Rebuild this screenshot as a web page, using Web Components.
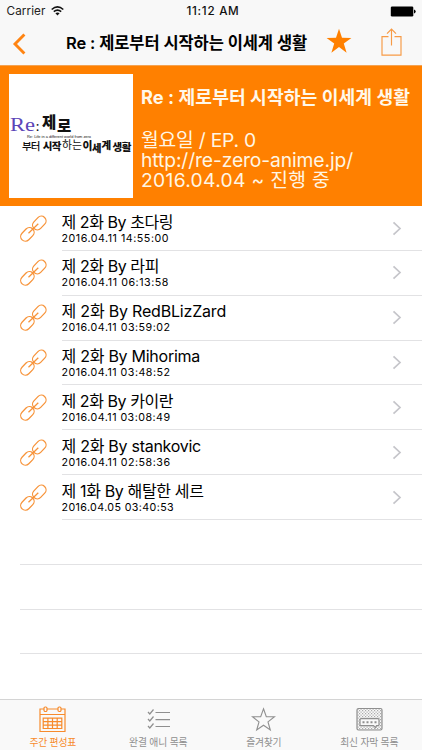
<!DOCTYPE html>
<html lang="ko">
<head>
<meta charset="utf-8">
<title>Re : 제로부터 시작하는 이세계 생활</title>
<style>
html,body{margin:0;height:100%;background:#fff;overflow:hidden}
body{font-family:Inter,"Noto Sans CJK KR",sans-serif;color:#000}
</style>
</head>
<body>
<app-screen></app-screen>
<script>
const define = (name, html, setup) => {
  const t = document.createElement('template');
  t.innerHTML = html;
  customElements.define(name, class extends HTMLElement {
    connectedCallback() {
      if (this.shadowRoot) return;
      this.attachShadow({mode: 'open'}).append(t.content.cloneNode(true));
      if (setup) setup(this, this.shadowRoot);
    }
  });
};

/* One line of text, tracked to the width given in its w attribute. */
define('fit-text', `<style>:host{display:block;white-space:pre}span{display:inline-block}</style><span><slot></slot></span>`, (el, root) => {
  const s = root.querySelector('span');
  const w = +el.getAttribute('w');
  const n = [...el.textContent].length;
  s.style.letterSpacing = ((w - s.getBoundingClientRect().width) / n) + 'px';
});

define('status-bar', `<style>
:host{display:grid;grid-template-columns:1fr auto 1fr;height:22px;align-items:center;font-size:11.7px;line-height:22px;color:#222}
.l{display:flex;align-items:center;gap:5px;padding-left:6.500px}
.r{display:flex;justify-content:flex-end;padding-right:6px}
.t{font-weight:500;color:#111;padding-left:4px}
svg{display:block}
</style>
<div class="l"><fit-text w="39">Carrier</fit-text>
<svg width="13" height="10" viewBox="0 0 13 10"><g fill="none" stroke="#111" stroke-width="1.6"><path d="M.7 3.5Q6.5-1.7 12.3 3.5"/><path d="M2.8 5.7Q6.5 2.4 10.2 5.7"/></g><path d="M4.4 7.3Q6.5 5.5 8.6 7.3L6.5 9.5Z" fill="#111"/></svg></div>
<fit-text class="t" w="53">11:12 AM</fit-text>
<div class="r"><svg width="26" height="11" viewBox="0 0 26 11"><rect x=".8" y=".5" width="22.5" height="10" rx="1.3" fill="#000"/><path d="M24 3.6q1.7.4 1.7 1.9t-1.7 1.9z" fill="#000"/></svg></div>`);

define('nav-bar', `<style>
:host{display:flex;height:43px;align-items:center;padding:0 18px 0 12px;border-bottom:1px solid #f4a251}
fit-text{font-size:16.5px;font-weight:600;line-height:41px;margin-left:40px;flex:none}
.star{margin-left:18.500px;flex:none;margin-top:-5px}.share{margin-left:29.500px;flex:none;margin-top:-3px}
</style>
<svg width="14" height="22" viewBox="0 0 14 22"><path d="M12.4 1.5 3 11l9.400 9.500" fill="none" stroke="#ff8412" stroke-width="2.900"/></svg>
<fit-text w="241">Re : 제로부터 시작하는 이세계 생활</fit-text>
<svg class="star" width="26" height="26" viewBox="0 0 26 26"><path d="M13 .7 16 9.800 25.400 9.900 17.800 15.500 20.600 24.700 13 19.100 5.400 24.700 8.200 15.500.6 9.900 10 9.800Z" fill="#ff8000"/></svg>
<svg class="share" width="21" height="28" viewBox="0 0 21 28"><path d="M7.500 8.600H1v18.500h19V8.600h-6.500M10.500 17.500V1M6 5.600 10.500 1 15 5.600" fill="none" stroke="#f79a45" stroke-width="1.150"/></svg>`);

define('title-logo', `<style>:host{display:block;width:124px;height:124px;background:#fff}svg{display:block}
text{font-family:"Noto Sans CJK KR",sans-serif;fill:#111}.b{font-weight:900}.m{font-weight:500}</style>
<svg width="124" height="124" viewBox="8.500 74 124 124">
<text x="9.500" y="131" style="font-family:'Liberation Serif',serif;fill:#5b45b8" font-size="19.500" textLength="25" lengthAdjust="spacingAndGlyphs">Re</text>
<text x="35" y="131" style="font-family:'Liberation Serif',serif" font-size="15">:</text>
<text class="b" x="41.500" y="128.300" font-size="15.500">제</text>
<text class="b" x="56.500" y="132.300" font-size="15.500">로</text>
<text x="26.500" y="138" font-size="4" style="font-family:'Liberation Sans',sans-serif" textLength="64" lengthAdjust="spacingAndGlyphs">Re: Life in a different world from zero</text>
<text class="m" x="21.500" y="150.300" font-size="10.500" textLength="18.500">부터</text>
<text class="b" x="42.300" y="150.300" font-size="10.500" textLength="18.500">시작</text>
<text x="61.500" y="149" font-size="10.800" textLength="20">하는</text>
<text class="b" x="82" y="150" font-size="10.800">이</text>
<text class="b" x="91.500" y="152" font-size="10.300">세</text>
<text class="b" x="101" y="148.800" font-size="10.500">계</text>
<text class="b" x="112" y="150.500" font-size="10.500" textLength="19">생활</text>
</svg>`);

define('anime-hero', `<style>
:host{display:flex;height:140px;box-sizing:border-box;background:#ff8000;padding:8px 9px 8px 8.500px;gap:8.500px;color:#fff6e4}
title-logo{flex:none}
.info{padding-top:11px}
fit-text{font-size:19.300px;line-height:20.400px;font-weight:400}
.h{font-size:18.200px;line-height:24px;font-weight:700;margin-bottom:20.500px;color:#fff8ea}
</style>
<title-logo></title-logo>
<div class="info">
<fit-text class="h" w="269">Re : 제로부터 시작하는 이세계 생활</fit-text>
<fit-text w="115">월요일 / EP. 0</fit-text>
<fit-text w="212">http://re-zero-anime.jp/</fit-text>
<fit-text w="189">2016.04.04 ~ 진행 중</fit-text>
</div>`);

define('subtitle-row', `<style>
:host{display:flex;height:44.850px;box-sizing:border-box;padding-left:20px}
.ic{width:26px;flex:none;padding-top:8.500px;margin-right:15.500px}
.body{flex:1;display:flex;justify-content:space-between;border-bottom:1px solid #e2e2e4;padding:6.500px 20px 0 0}
.name{font-size:16px;line-height:19px}
.date{font-size:10.700px;line-height:13px}
.chev{margin-top:8px}
</style>
<div class="ic"><svg width="27" height="28" viewBox="0 0 27 28"><g fill="none" stroke="#f79339" stroke-width="1.250"><rect x="-7.600" y="-4.700" width="15.200" height="9.400" rx="4.700" transform="translate(19.300 8) rotate(-46)"/><rect x="-7.600" y="-4.700" width="15.200" height="9.400" rx="4.700" transform="translate(7.400 19.400) rotate(-46)"/><path d="M8.500 18.300 18.300 8.800"/></g></svg></div>
<div class="body"><div><div class="name"></div><div class="date"></div></div>
<svg class="chev" width="10" height="15" viewBox="0 0 10 15"><path d="M1.500 1.300 8 7.500l-6.500 6.200" fill="none" stroke="#c5c5ca" stroke-width="1.700"/></svg></div>`, (el, root) => {
  for (const k of ['name', 'date']) {
    const f = document.createElement('fit-text');
    f.setAttribute('w', el.getAttribute(k + '-w'));
    f.textContent = el.getAttribute(k);
    root.querySelector('.' + k).append(f);
  }
});

define('empty-row', `<style>:host{display:block;height:44.850px;box-sizing:border-box;border-bottom:1px solid #e2e2e4;margin-left:20px}</style>`);

define('tab-item', `<style>
:host{display:flex;flex-direction:column;align-items:center;color:#8f8f8f;font-size:9.800px}
:host([active]){color:#f78b2c}
.i{height:28px;display:flex;align-items:center;margin-top:5px}
.t{line-height:13px;margin-top:3px}
</style><div class="i"><slot name="icon"></slot></div><div class="t"><slot></slot></div>`);

define('tab-bar', `<style>
:host{display:grid;grid-template-columns:repeat(4,1fr);height:51px;box-sizing:border-box;background:#f9f9f9;border-top:1px solid #d4d4d4}
svg{display:block;fill:none;stroke:currentColor}
</style>
<tab-item active><svg slot="icon" width="27" height="27" viewBox="0 0 27 27" stroke-width="1.200"><path d="M5 3H1v22.500h25V3h-4M8 3h11M1 8.500h25"/><rect x="5" y="1" width="3" height="4.500" rx="1.200"/><rect x="19" y="1" width="3" height="4.500" rx="1.200"/><path d="M4.200 12.200h18.600v10.300H4.200zM4.200 15.600h18.600M4.200 19.100h18.600M8.900 12.200v10.300M13.500 12.200v10.300M18.200 12.200v10.300"/></svg><fit-text w="46.500">주간 편성표</fit-text></tab-item>
<tab-item><svg slot="icon" width="23" height="22" viewBox="0 0 23 22" stroke-width="1.200"><path d="M8.500 4.500H23M8.500 11.600H23M8.500 18.500H23M1 4l1.800 2L6.500 1.500M1 11l1.800 2 3.700-4.500M1 18l1.800 2 3.700-4.500"/></svg><fit-text w="58.500">완결 애니 목록</fit-text></tab-item>
<tab-item><svg slot="icon" width="25" height="25" viewBox="0 0 25 25" stroke-width="1.100"><path d="M12.500 1.800 15.300 9.700 23.500 9.800 17 14.900 19.300 23 12.500 18.200 5.700 23 8 14.900 1.500 9.800 9.700 9.700Z"/></svg><fit-text w="35">즐겨찾기</fit-text></tab-item>
<tab-item><svg slot="icon" width="27" height="24" viewBox="0 0 27 24" stroke-width="1.200"><defs><pattern id="d" width="3" height="3" patternUnits="userSpaceOnUse"><path d="M0 0h1.200v1.200H0zM1.500 1.500h1.200v1.200H1.500z" fill="#aaa" stroke="none"/></pattern></defs><rect x="1" y="1.500" width="25" height="21.500" rx="1.500" fill="url(#d)"/><path d="M5 11.700h17q1 0 1 1v5q0 1-1 1h-1.500l-1 2-2-2H5q-1 0-1-1v-5q0-1 1-1z" fill="#f9f9f9"/><path d="M6.500 15.200h14" stroke-width="2" stroke-dasharray="2 2"/></svg><fit-text w="58">최신 자막 목록</fit-text></tab-item>`);

define('app-screen', `<style>
:host{display:flex;flex-direction:column;width:422px;height:750px;background:#fff}
.top{background:#f8f8f8}
.list{flex:1;min-height:0;overflow:hidden}
</style>
<div class="top"><status-bar></status-bar><nav-bar></nav-bar></div>
<anime-hero></anime-hero>
<div class="list">
<subtitle-row name="제 2화 By 초다링" name-w="111.500" date="2016.04.11 14:55:00" date-w="107.500"></subtitle-row>
<subtitle-row name="제 2화 By 라피" name-w="97.500" date="2016.04.11 06:13:58" date-w="107.500"></subtitle-row>
<subtitle-row name="제 2화 By RedBLizZard" name-w="164.500" date="2016.04.11 03:59:02" date-w="109"></subtitle-row>
<subtitle-row name="제 2화 By Mihorima" name-w="138.500" date="2016.04.11 03:48:52" date-w="109"></subtitle-row>
<subtitle-row name="제 2화 By 카이란" name-w="111.500" date="2016.04.11 03:08:49" date-w="109"></subtitle-row>
<subtitle-row name="제 2화 By stankovic" name-w="139.500" date="2016.04.11 02:58:36" date-w="109"></subtitle-row>
<subtitle-row name="제 1화 By 해탈한 세르" name-w="142" date="2016.04.05 03:40:53" date-w="112.500"></subtitle-row>
<empty-row></empty-row><empty-row></empty-row><empty-row></empty-row>
</div>
<tab-bar></tab-bar>`);
</script>
</body>
</html>
